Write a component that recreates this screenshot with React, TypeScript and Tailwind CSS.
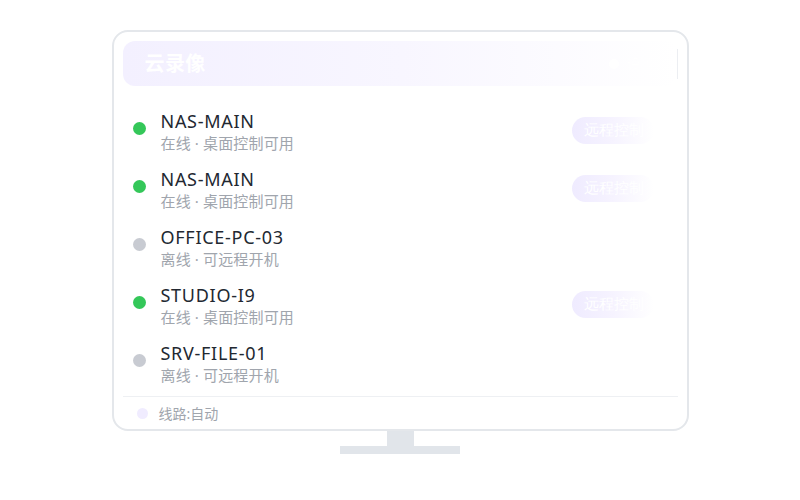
import React from 'react'

interface Device {
  name: string
  online: boolean
}

const DEVICES: Device[] = [
  { name: 'NAS-MAIN', online: true },
  { name: 'NAS-MAIN', online: true },
  { name: 'OFFICE-PC-03', online: false },
  { name: 'STUDIO-I9', online: true },
  { name: 'SRV-FILE-01', online: false },
]

function DeviceRow({ device }: { device: Device }) {
  return (
    <div className="flex items-center py-[7px] pl-[10px] pr-[24px]">
      <div
        className={`w-[13px] h-[13px] rounded-full shrink-0 mt-[-6px] ${
          device.online ? 'bg-[#34c759]' : 'bg-[#c8cbd2]'
        }`}
      />
      <div className="ml-[15px] flex-1 flex flex-col">
        <span className="text-[18px] leading-[24px] text-[#222831] tracking-[0.04em]">{device.name}</span>
        <span className="text-[15px] leading-[20px] text-[#a0a5ad] tracking-[0.01em]">
          {device.online ? '在线 · 桌面控制可用' : '离线 · 可远程开机'}
        </span>
      </div>
      {device.online && (
        <div className="w-[82px] h-[27px] rounded-full bg-gradient-to-r from-[#efebff] via-[#f6f3ff] to-white flex items-center pl-[12px] mt-[-2px]">
          <span className="text-[15px] text-white" style={{ fontFamily: 'serif' }}>
            远程控制
          </span>
        </div>
      )}
    </div>
  )
}

export default function App() {
  return (
    <div
      className="w-[800px] h-[500px] bg-white flex flex-col items-center pt-[30px]"
      style={{ fontFamily: '"Noto Sans", "Noto Sans CJK SC", sans-serif' }}
    >
      {/* Screen */}
      <div className="w-[577px] h-[401px] rounded-[16px] border-2 border-[#e4e7eb] bg-white px-[9px] pt-[9px] flex flex-col">
        {/* Header */}
        <div className="h-[45px] rounded-[12px] bg-gradient-to-r from-[#f3f0ff] via-[#f8f6ff] to-white flex items-center pl-[22px]">
          <span className="text-[20px] font-bold text-white tracking-[0.02em]">云录像</span>
          <div className="ml-auto flex items-center gap-2 h-[30px] border-r border-[#eceef2] pr-[22px]">
            <div className="w-[10px] h-[10px] rounded-full bg-white" />
            <span className="text-[14px] text-white">设置</span>
          </div>
        </div>

        {/* Device list */}
        <div className="mt-[16px] flex flex-col">
          {DEVICES.map((d, i) => (
            <DeviceRow key={i} device={d} />
          ))}
        </div>

        {/* Footer */}
        <div className="mt-[4px] border-t border-[#eef0f3] flex items-center h-[33px] pl-[14px]">
          <div className="w-[11px] h-[11px] rounded-full bg-[#f0ecff]" />
          <span className="ml-[11px] text-[14px] text-[#a0a5ad]">线路:自动</span>
        </div>
      </div>

      {/* Stand */}
      <div className="w-[27px] h-[15px] bg-[#e1e5ea]" />
      <div className="w-[120px] h-[8px] bg-[#e1e5ea]" />
    </div>
  )
}
